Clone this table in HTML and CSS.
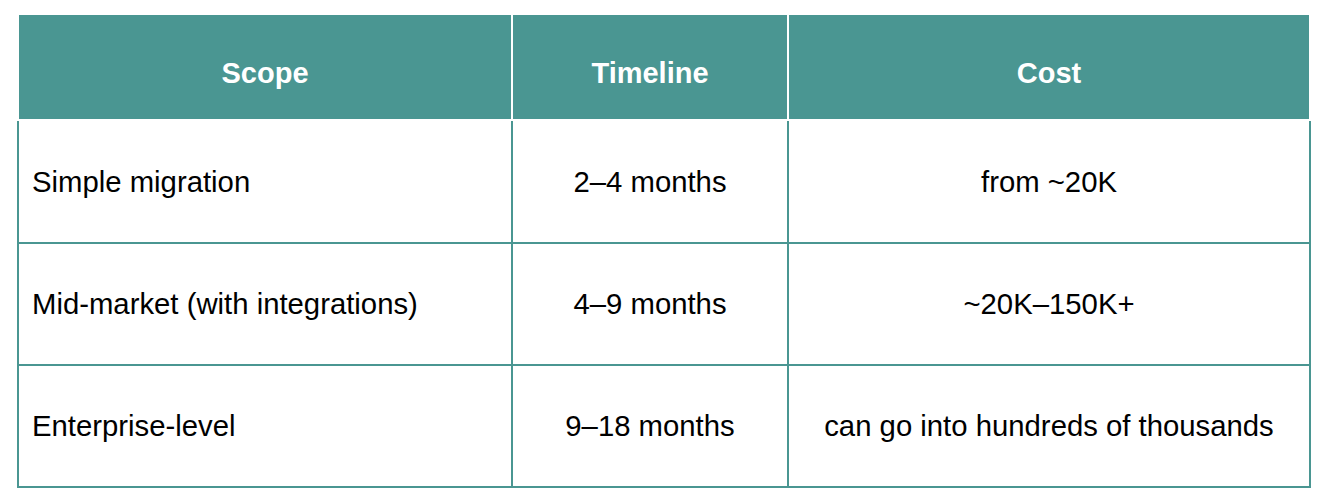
FILE: index.html
```html
<!DOCTYPE html>
<html lang="en">
<head>
<meta charset="utf-8">
<title>Migration scope</title>
<link rel="stylesheet" href="styles.css">
</head>
<body>
<div class="table">
  <div class="row head">
    <div class="cell">Scope</div>
    <div class="cell">Timeline</div>
    <div class="cell">Cost</div>
  </div>
  <div class="body">
    <div class="row r1">
      <div class="cell left">Simple migration</div>
      <div class="cell">2–4 months</div>
      <div class="cell">from ~20K</div>
    </div>
    <div class="row">
      <div class="cell left">Mid-market (with integrations)</div>
      <div class="cell">4–9 months</div>
      <div class="cell">~20K–150K+</div>
    </div>
    <div class="row">
      <div class="cell left">Enterprise-level</div>
      <div class="cell">9–18 months</div>
      <div class="cell">can go into hundreds of thousands</div>
    </div>
  </div>
</div>
</body>
</html>
```
FILE: styles.css
```css
html, body {
  margin: 0;
  padding: 0;
  background: #ffffff;
}
body {
  font-family: "Liberation Sans", Arial, sans-serif;
  color: #000000;
}
.table {
  margin: 13px 0 0 17px;
  width: 1294px;
}
.row {
  display: grid;
  grid-template-columns: 492px 274px 520px;
  column-gap: 2px;
}
.head {
  background: #ffffff;
  padding: 2px;
}
.head .cell {
  background: #4a9692;
  color: #ffffff;
  font-weight: bold;
  font-size: 29px;
  height: 104px;
  box-sizing: border-box;
  padding-top: 13px;
  display: flex;
  align-items: center;
  justify-content: center;
}
.body {
  background: #4a9692;
  padding: 0 2px 2px 2px;
  display: flex;
  flex-direction: column;
  row-gap: 2px;
}
.body .cell {
  background: #ffffff;
  font-size: 29.3px;
  height: 120px;
  display: flex;
  align-items: center;
  justify-content: center;
}
.body .r1 .cell {
  height: 121px;
}
.body .cell.left {
  justify-content: flex-start;
  padding-left: 13px;
}
```
